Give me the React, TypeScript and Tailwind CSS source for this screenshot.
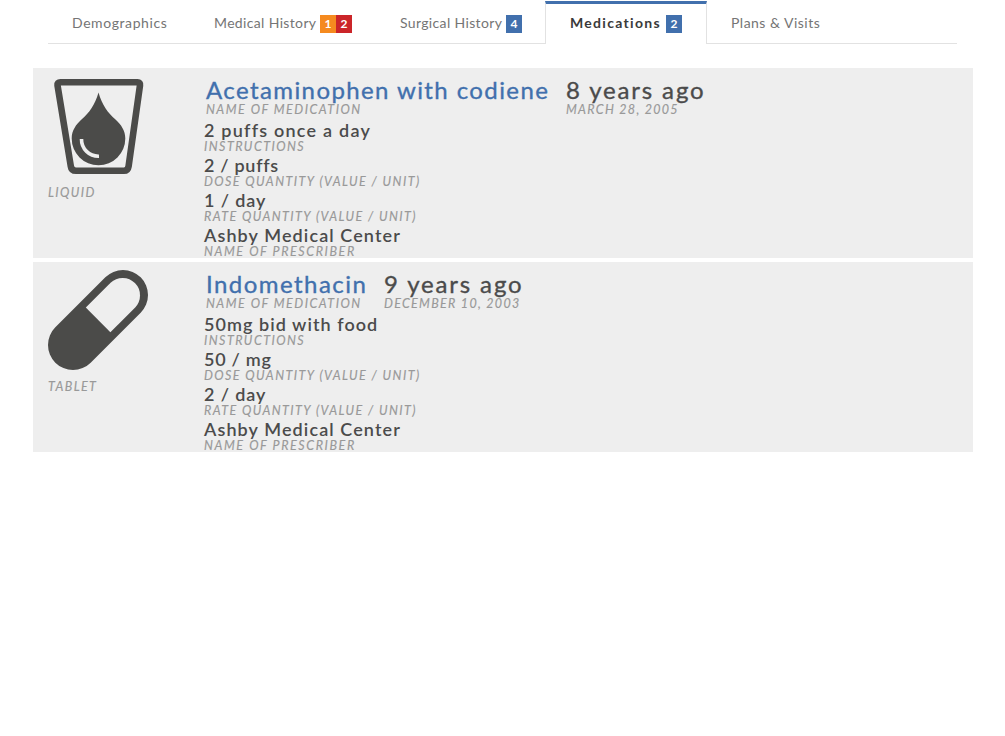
import React from 'react';

const TABS = [
  { label: 'Demographics', width: 'w-[142px]', track: 'tracking-[0.58px]', badges: [] },
  {
    label: 'Medical History',
    width: 'w-[186px]',
    track: 'tracking-[0.35px]',
    badges: [
      { count: 1, color: 'bg-[#f58a1f]' },
      { count: 2, color: 'bg-[#cb2529]' },
    ],
  },
  { label: 'Surgical History', width: 'w-[170px]', track: 'tracking-[0.35px]', badges: [{ count: 4, color: 'bg-[#4170ad]' }] },
  { label: 'Medications', width: '-ml-px w-[162px]', track: 'tracking-[1.3px]', badges: [{ count: 2, color: 'bg-[#4170ad]' }], active: true },
  { label: 'Plans & Visits', width: 'flex-1', track: 'tracking-[0.48px]', badges: [] },
];

const MEDICATIONS = [
  {
    form: 'Liquid',
    formTrack: 'tracking-[1.4px]',
    icon: LiquidIcon,
    name: 'Acetaminophen with codiene',
    nameWidth: 'w-[360px]',
    nameTrack: 'tracking-[1.4px]',
    ago: '8 years ago',
    agoTrack: 'tracking-[1.85px]',
    date: 'March 28, 2005',
    dateTrack: 'tracking-[1.3px]',
    details: [
      { value: '2 puffs once a day', track: 'tracking-[1.22px]', label: 'Instructions', labelTrack: 'tracking-[1.45px]' },
      { value: '2 / puffs', track: 'tracking-[0.7px]', label: 'Dose Quantity (value / unit)', labelTrack: 'tracking-[1.43px]' },
      { value: '1 / day', track: 'tracking-[0.9px]', label: 'Rate Quantity (value / unit)', labelTrack: 'tracking-[1.42px]' },
      { value: 'Ashby Medical Center', track: 'tracking-[1.1px]', label: 'Name of Prescriber', labelTrack: 'tracking-[1.59px]' },
    ],
  },
  {
    form: 'Tablet',
    formTrack: 'tracking-[1.4px]',
    icon: TabletIcon,
    name: 'Indomethacin',
    nameWidth: 'w-[178px]',
    nameTrack: 'tracking-[1.45px]',
    ago: '9 years ago',
    agoTrack: 'tracking-[1.85px]',
    date: 'December 10, 2003',
    dateTrack: 'tracking-[1.3px]',
    details: [
      { value: '50mg bid with food', track: 'tracking-[1.05px]', label: 'Instructions', labelTrack: 'tracking-[1.45px]' },
      { value: '50 / mg', track: 'tracking-[0.75px]', label: 'Dose Quantity (value / unit)', labelTrack: 'tracking-[1.43px]' },
      { value: '2 / day', track: 'tracking-[0.9px]', label: 'Rate Quantity (value / unit)', labelTrack: 'tracking-[1.42px]' },
      { value: 'Ashby Medical Center', track: 'tracking-[1.1px]', label: 'Name of Prescriber', labelTrack: 'tracking-[1.59px]' },
    ],
  },
];

function LiquidIcon() {
  return (
    <svg width="100" height="100" viewBox="0 0 100 100" className="block">
      <path
        d="M12.5 6.3H89.5Q92.5 6.3 92 9.3L80.6 90.2Q79.9 94.7 76 94.7H28Q23.4 94.7 22.8 90.2L9.5 9.3Q9 6.3 12.5 6.3Z"
        fill="none"
        stroke="#4b4b49"
        strokeWidth="6.6"
      />
      <path
        d="M50.5 16.5C54 29 60 37 67.5 43.5C73 48.5 77.3 54.5 77.3 62.5A26.8 26.8 0 0 1 23.7 62.5C23.7 54.5 28 48.5 33.5 43.5C41 37 47 29 50.5 16.5Z"
        fill="#4b4b49"
      />
      <path d="M33.5 63A17 17 0 0 0 51 80.3" fill="none" stroke="#eee" strokeWidth="3.6" />
    </svg>
  );
}

function TabletIcon() {
  return (
    <svg width="100" height="100" viewBox="0 0 100 100" className="block">
      <path d="M75 25L25 75" stroke="#4b4b49" strokeWidth="50" strokeLinecap="round" />
      <path d="M37.8 37.6L62.6 12.8A17.4 17.4 0 0 1 87.2 37.4L62.4 62.2Z" fill="#eee" />
    </svg>
  );
}

function Caption({ text, track }: { text: string; track: string }) {
  return (
    <div className={`mt-px text-[12.5px] leading-3 h-3 italic uppercase text-[#999] [-webkit-text-stroke:0.15px_#999] ${track}`}>
      {text}
    </div>
  );
}

export default function App() {
  return (
    <div className="min-h-screen w-[1005px] bg-white font-['Lato',sans-serif] whitespace-nowrap">
      <nav className="ml-12 mr-12 flex h-11 pt-px">
        {TABS.map((tab) => (
          <div
            key={tab.label}
            className={`flex items-start h-[43px] ${tab.width} ${
              tab.active
                ? 'bg-white border-t-3 border-x border-t-[#4170ad] border-x-[#e2e2e2] pl-6 pt-[11px] font-bold text-[#3a3a3a]'
                : 'border-b border-[#e2e2e2] pl-6 pt-3.5 text-[#757575]'
            }`}
          >
            <span className={`text-[14px] leading-4 ${tab.track}`}>{tab.label}</span>
            {tab.badges.length > 0 && (
              <span className="ml-auto mr-6 flex">
                {tab.badges.map((badge) => (
                  <span key={badge.count} className={`w-4 h-[18px] text-center text-[12px] leading-[17px] font-bold text-white ${badge.color}`}>
                    {badge.count}
                  </span>
                ))}
              </span>
            )}
          </div>
        ))}
      </nav>

      <main className="ml-[33px] mt-6 w-[940px] space-y-1">
        {MEDICATIONS.map((med) => {
          const Icon = med.icon;

          return (
            <section key={med.name} className="flex h-[190px] bg-[#eee] pl-[15px]">
              <div className="w-[156px] pt-2">
                <Icon />
                <div className="pt-2.5">
                  <Caption text={med.form} track={med.formTrack} />
                </div>
              </div>

              <div className="pt-2">
                <div className="flex h-11 pl-0.5">
                  <div className={med.nameWidth}>
                    <div className={`text-[24px] leading-[27px] text-[#4170ad] [-webkit-text-stroke:0.35px_#4170ad] ${med.nameTrack}`}>{med.name}</div>
                    <Caption text="Name of Medication" track="tracking-[1.5px]" />
                  </div>
                  <div>
                    <div className={`text-[24px] leading-[27px] text-[#4b4b4b] [-webkit-text-stroke:0.35px_#4b4b4b] ${med.agoTrack}`}>{med.ago}</div>
                    <Caption text={med.date} track={med.dateTrack} />
                  </div>
                </div>

                {med.details.map((row) => (
                  <div key={row.label} className="h-[35px]">
                    <div className={`text-[18px] leading-5 font-semibold text-[#4b4b4b] ${row.track}`}>{row.value}</div>
                    <Caption text={row.label} track={row.labelTrack} />
                  </div>
                ))}
              </div>
            </section>
          );
        })}
      </main>
    </div>
  );
}
